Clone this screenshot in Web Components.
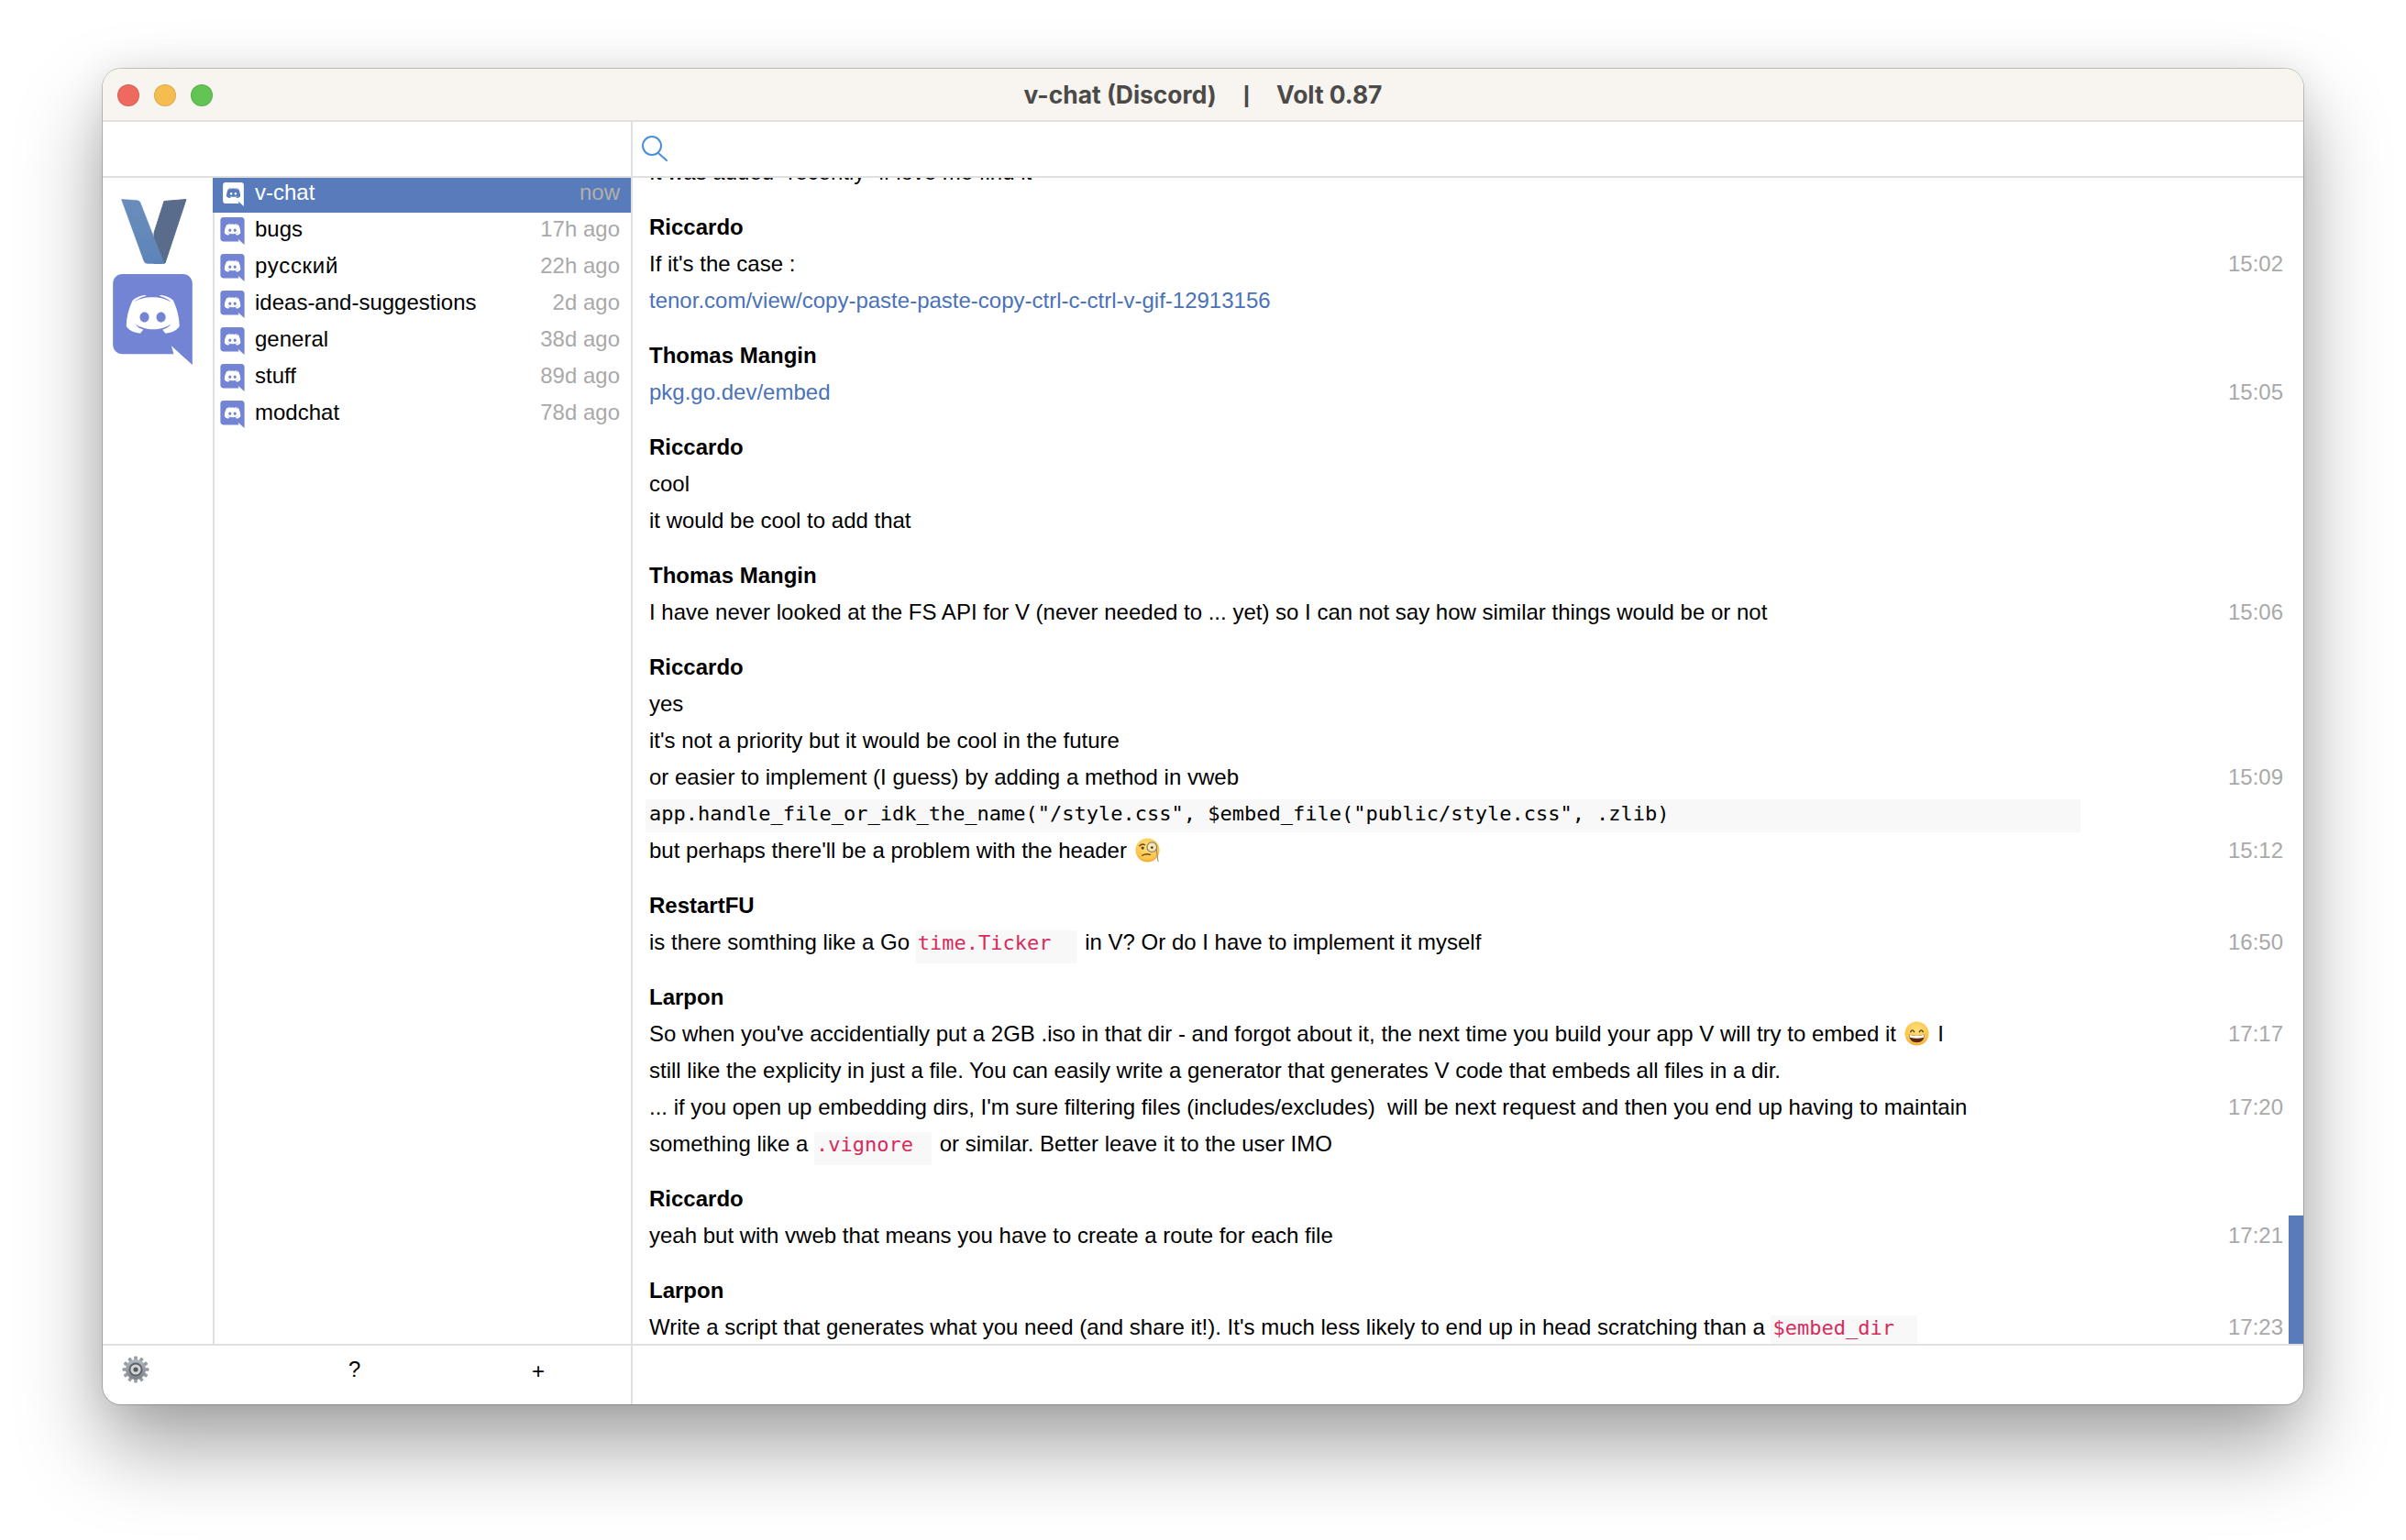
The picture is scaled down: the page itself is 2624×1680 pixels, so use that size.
<!DOCTYPE html>
<html>
<head>
<meta charset="utf-8">
<title>v-chat (Discord) | Volt 0.87</title>
<style>
  html, body { margin: 0; background: #fff; }
  body { padding: 75px 112px 0; height: 1680px; box-sizing: border-box; overflow: hidden; font-family: "Liberation Sans", Arial, sans-serif; }
</style>
</head>
<body>
<mac-window>
  <server-rail slot="rail"></server-rail>
  <channel-row slot="channels" name="v-chat" time="now" selected></channel-row>
  <channel-row slot="channels" name="bugs" time="17h ago"></channel-row>
  <channel-row slot="channels" name="русский" time="22h ago" style="--name-spacing:.7px"></channel-row>
  <channel-row slot="channels" name="ideas-and-suggestions" time="2d ago"></channel-row>
  <channel-row slot="channels" name="general" time="38d ago"></channel-row>
  <channel-row slot="channels" name="stuff" time="89d ago"></channel-row>
  <channel-row slot="channels" name="modchat" time="78d ago"></channel-row>
  <side-foot slot="sidefoot"></side-foot>
  <search-bar slot="search"></search-bar>

  <message-group slot="messages">
    <chat-line>It was added "recently" if love me find it</chat-line>
  </message-group>
  <message-group slot="messages" author="Riccardo">
    <chat-line time="15:02">If it's the case :</chat-line>
    <chat-line><a href="#" style="color:#4a72b8;text-decoration:none">tenor.com/view/copy-paste-paste-copy-ctrl-c-ctrl-v-gif-12913156</a></chat-line>
  </message-group>
  <message-group slot="messages" author="Thomas Mangin">
    <chat-line time="15:05"><a href="#" style="color:#4a72b8;text-decoration:none">pkg.go.dev/embed</a></chat-line>
  </message-group>
  <message-group slot="messages" author="Riccardo">
    <chat-line>cool</chat-line>
    <chat-line>it would be cool to add that</chat-line>
  </message-group>
  <message-group slot="messages" author="Thomas Mangin">
    <chat-line time="15:06">I have never looked at the FS API for V (never needed to ... yet) so I can not say how similar things would be or not</chat-line>
  </message-group>
  <message-group slot="messages" author="Riccardo">
    <chat-line>yes</chat-line>
    <chat-line>it's not a priority but it would be cool in the future</chat-line>
    <chat-line time="15:09">or easier to implement (I guess) by adding a method in vweb</chat-line>
    <code-block>app.handle_file_or_idk_the_name("/style.css", $embed_file("public/style.css", .zlib)</code-block>
    <chat-line time="15:12">but perhaps there'll be a problem with the header <chat-emoji kind="monocle"></chat-emoji></chat-line>
  </message-group>
  <message-group slot="messages" author="RestartFU">
    <chat-line time="16:50">is there somthing like a Go <inline-code style="padding-right:28px">time.Ticker</inline-code> in V? Or do I have to implement it myself</chat-line>
  </message-group>
  <message-group slot="messages" author="Larpon">
    <chat-line time="17:17">So when you've accidentially put a 2GB .iso in that dir - and forgot about it, the next time you build your app V will try to embed it <chat-emoji kind="grin"></chat-emoji> I</chat-line>
    <chat-line>still like the explicity in just a file. You can easily write a generator that generates V code that embeds all files in a dir.</chat-line>
    <chat-line time="17:20">... if you open up embedding dirs, I'm sure filtering files (includes/excludes)&nbsp; will be next request and then you end up having to maintain</chat-line>
    <chat-line>something like a <inline-code style="padding-right:20px">.vignore</inline-code> or similar. Better leave it to the user IMO</chat-line>
  </message-group>
  <message-group slot="messages" author="Riccardo">
    <chat-line time="17:21">yeah but with vweb that means you have to create a route for each file</chat-line>
  </message-group>
  <message-group slot="messages" author="Larpon">
    <chat-line time="17:23">Write a script that generates what you need (and share it!). It's much less likely to end up in head scratching than a <inline-code style="padding-right:25px">$embed_dir</inline-code></chat-line>
  </message-group>
</mac-window>

<script>
// Discord logo, bubble and face as one path; the face is a hole so the row colour shows through.
const DISCORD = `<svg viewBox="35 20 175 200" aria-hidden="true">
  <path d="M104.4 103.9c-5.7 0-10.2 5-10.2 11.1s4.6 11.1 10.2 11.1c5.7 0 10.2-5 10.2-11.1.1-6.1-4.5-11.1-10.2-11.1zM140.9 103.9c-5.7 0-10.2 5-10.2 11.1s4.6 11.1 10.2 11.1c5.7 0 10.2-5 10.2-11.1s-4.5-11.1-10.2-11.1z"/>
  <path d="M189.5 20h-134C44.2 20 35 29.2 35 40.6v135.2c0 11.4 9.2 20.6 20.5 20.6h113.4l-5.3-18.5 12.8 11.9 12.1 11.2 21.5 19V40.6c0-11.4-9.2-20.6-20.5-20.6zm-38.6 130.6s-3.6-4.3-6.6-8.1c13.1-3.7 18.1-11.9 18.1-11.9-4.1 2.7-8 4.6-11.5 5.9-5 2.1-9.8 3.5-14.5 4.3-9.6 1.8-18.4 1.3-25.9-.1-5.7-1.1-10.6-2.7-14.7-4.3-2.3-.9-4.8-2-7.3-3.4-.3-.2-.6-.3-.9-.5-.2-.1-.3-.2-.4-.3-1.8-1-2.8-1.7-2.8-1.7s4.8 8 17.5 11.8c-3 3.8-6.7 8.3-6.7 8.3-22.1-.7-30.5-15.2-30.5-15.2 0-32.2 14.4-58.3 14.4-58.3 14.4-10.8 28.1-10.5 28.1-10.5l1 1.2c-18 5.2-26.3 13.1-26.3 13.1s2.2-1.2 5.9-2.9c10.7-4.7 19.2-6 22.7-6.3.6-.1 1.1-.2 1.7-.2 6.1-.8 13-1 20.2-.2 9.5 1.1 19.7 3.9 30.1 9.6 0 0-7.9-7.5-24.9-12.7l1.4-1.6s13.7-.3 28.1 10.5c0 0 14.4 26.1 14.4 58.3 0 0-8.5 14.5-30.6 15.2z"/>
</svg>`;

const LINE = '#e0e0e0';

// --- leaf elements first, so they are ready when the lines around them lay out ---
class ChatEmoji extends HTMLElement {
  constructor() {
    super();
    this.attachShadow({ mode: 'open' });
  }
  connectedCallback() {
    const face = this.getAttribute('kind') === 'grin' ? `
      <path d="M7 12 Q9 8.5 11 12 M17 12 Q19 8.5 21 12" fill="none" stroke="#5a3a10" stroke-width="1.5" stroke-linecap="round"/>
      <path d="M5 15 Q14 18 23 15 Q22.5 24 14 24 Q5.5 24 5 15 Z" fill="#5a2a10"/>
      <path d="M5.5 15.2 Q14 18 22.5 15.2 L22 18.5 Q14 20.5 6 18.5 Z" fill="#fff"/>` : `
      <path d="M5 9 Q8 6 11 8" fill="none" stroke="#6b4410" stroke-width="1.4" stroke-linecap="round"/>
      <circle cx="8.5" cy="11.5" r="1.6" fill="#5a3a10"/>
      <path d="M8 20 Q12 17.5 17 19" fill="none" stroke="#6b4410" stroke-width="1.4" stroke-linecap="round"/>
      <circle cx="19" cy="10.5" r="5.5" fill="#f4efdc" fill-opacity=".7" stroke="#8b8270" stroke-width="1.3"/>
      <circle cx="19" cy="11" r="1.5" fill="#5a3a10"/>
      <path d="M24 13 Q25 20 26 27" fill="none" stroke="#8b8270" stroke-width="1"/>`;
    this.shadowRoot.innerHTML = `
      <style>
        :host { display: inline-block; width: 27px; height: 27px; margin: 0 3px -5px 2px; }
        svg { display: block; width: 100%; height: 100%; overflow: visible; }
      </style>
      <svg viewBox="0 0 28 28" aria-hidden="true">
        <defs>
          <radialGradient id="f" cx=".5" cy=".35" r=".75"><stop offset="0" stop-color="#ffe27a"/><stop offset=".7" stop-color="#fbc34a"/><stop offset="1" stop-color="#e8912a"/></radialGradient>
        </defs>
        <circle cx="14" cy="14" r="13.5" fill="url(#f)"/>
        ${face}
      </svg>`;
  }
}

class InlineCode extends HTMLElement {
  constructor() {
    super();
    this.attachShadow({ mode: 'open' }).innerHTML = `
      <style>
        :host { display: inline-block; height: 36px; margin-right: 2px; padding-left: 2px; background: #f8f8f8; color: #d72b5c; font: 22px/28px "DejaVu Sans Mono", "Liberation Mono", monospace; }
      </style>
      <slot></slot>`;
  }
}

class CodeBlock extends HTMLElement {
  constructor() {
    super();
    this.attachShadow({ mode: 'open' }).innerHTML = `
      <style>
        :host { display: block; height: 40px; box-sizing: border-box; padding: 4px 0 0 13.5px; }
        div { width: 1565px; height: 36px; box-sizing: border-box; padding-left: 4.5px; background: #f8f8f8; color: #000; font: 22px/32px "DejaVu Sans Mono", "Liberation Mono", monospace; white-space: pre; }
      </style>
      <div><slot></slot></div>`;
  }
}

class ChatLine extends HTMLElement {
  constructor() {
    super();
    this.attachShadow({ mode: 'open' });
  }
  connectedCallback() {
    const time = this.getAttribute('time');
    this.shadowRoot.innerHTML = `
      <style>
        :host { display: flex; height: 40px; padding: 0 22px 0 18px; font-size: 24px; line-height: 40px; color: #000; white-space: nowrap; }
        .text { flex: 1; }
        .time { color: #a9a9a9; }
      </style>
      <div class="text"><slot></slot></div>
      ${time ? `<div class="time">${time}</div>` : ''}`;
  }
}

class MessageGroup extends HTMLElement {
  constructor() {
    super();
    this.attachShadow({ mode: 'open' });
  }
  connectedCallback() {
    const author = this.getAttribute('author');
    this.shadowRoot.innerHTML = `
      <style>
        :host { display: block; margin-bottom: 20px; }
        .who { padding-left: 18px; font: bold 24px/40px "Liberation Sans", Arial, sans-serif; color: #000; }
      </style>
      ${author ? `<div class="who">${author}</div>` : ''}
      <slot></slot>`;
  }
}

class SearchBar extends HTMLElement {
  constructor() {
    super();
    this.attachShadow({ mode: 'open' }).innerHTML = `
      <style>
        :host { display: flex; align-items: center; height: 100%; padding-left: 9px; }
        svg { width: 30px; height: 28px; margin-top: -2px; fill: none; stroke: #4a90d9; stroke-width: 2; stroke-linecap: round; }
      </style>
      <svg viewBox="0 0 30 28" aria-hidden="true"><circle cx="12" cy="11" r="10"/><path d="M19 19 L28 27"/></svg>`;
  }
}

class SideFoot extends HTMLElement {
  constructor() {
    super();
    const teeth = Array.from({ length: 12 }, (_, i) =>
      `<rect x="13.2" y="0.5" width="3.6" height="6" rx=".8" fill="#969ca3" transform="rotate(${i * 30} 15 15)"/>`).join('');
    this.attachShadow({ mode: 'open' }).innerHTML = `
      <style>
        :host { display: block; height: 100%; font-size: 24px; color: #000; position: relative; }
        svg { display: block; width: 30px; height: 30px; padding: 11px 0 0 21px; }
        .q { position: absolute; left: 268px; top: 12px; }
        .p { position: absolute; left: 468px; top: 14px; }
      </style>
      <svg viewBox="0 0 30 30" aria-hidden="true">
        <defs>
          <linearGradient id="g" x1="0" y1="0" x2="0" y2="1"><stop offset="0" stop-color="#b4b9be"/><stop offset="1" stop-color="#7a8087"/></linearGradient>
        </defs>
        ${teeth}
        <circle cx="15" cy="15" r="11" fill="url(#g)"/>
        <circle cx="15" cy="15" r="7.5" fill="#5d6268"/>
        <circle cx="15" cy="15" r="5.6" fill="#d3d6d9"/>
        <circle cx="15" cy="15" r="2.6" fill="#55595e"/>
      </svg>
      <span class="q">?</span>
      <span class="p">+</span>`;
  }
}

class ChannelRow extends HTMLElement {
  constructor() {
    super();
    this.attachShadow({ mode: 'open' });
  }
  connectedCallback() {
    this.shadowRoot.innerHTML = `
      <style>
        :host { display: block; height: 40px; font-size: 24px; color: #000; }
        :host([selected]) { margin-left: -2px; }
        .row { display: flex; align-items: center; height: 38px; padding: 0 12px 0 6px; box-sizing: border-box; }
        :host([selected]) .row { background: #587cbb; color: #fff; padding-left: 11px; }
        svg { width: 27px; height: 30px; fill: #7484d4; flex: none; margin-top: -2px; }
        :host([selected]) svg { width: 23px; height: 26px; fill: #fff; margin-top: -3px; }
        .name { flex: 1; margin: -6px 0 0 11px; letter-spacing: var(--name-spacing, 0); }
        :host([selected]) .name { margin-left: 12px; }
        .time { color: #a9a9a9; margin-top: -6px; }
        :host([selected]) .time { color: #b3afab; }
      </style>
      <div class="row">
        ${DISCORD}
        <span class="name">${this.getAttribute('name')}</span>
        <span class="time">${this.getAttribute('time')}</span>
      </div>`;
  }
}

class ServerRail extends HTMLElement {
  constructor() {
    super();
    this.attachShadow({ mode: 'open' }).innerHTML = `
      <style>
        :host { display: flex; flex-direction: column; align-items: flex-start; padding: 23px 0 0 11px; }
        .v { width: 72px; height: 71px; margin-left: 9px; display: block; }
        .d { width: 87px; height: 99px; margin-top: 11px; display: block; fill: #7484d4; }
      </style>
      <svg class="v" viewBox="0 0 72 71" aria-hidden="true">
        <defs>
          <linearGradient id="vl" x1="0" y1="0" x2="0" y2="1"><stop offset="0" stop-color="#6a8dbb"/><stop offset="1" stop-color="#5d84b9"/></linearGradient>
        </defs>
        <path d="M47 2.5 L71 0.5 L48 70 L36 71 L36 37 Z" fill="#5a6c8c" stroke="#5a6c8c" stroke-linejoin="round"/>
        <path d="M0.5 0.5 L17 1.5 Q20 1.5 21 4 L47 70.5 L29 70.5 Q26 70.5 25 68 Z" fill="url(#vl)" stroke="#6388ba" stroke-width=".5" stroke-linejoin="round"/>
      </svg>
      ${DISCORD.replace('<svg ', '<svg class="d" ')}`;
  }
}

class MacWindow extends HTMLElement {
  constructor() {
    super();
    this.attachShadow({ mode: 'open' }).innerHTML = `
      <style>
        :host {
          display: grid;
          grid-template-columns: 120px 458px 1fr;
          grid-template-rows: 58px 61px 1fr 66px;
          width: 2400px;
          height: 1457px;
          border-radius: 20px;
          background: #fff;
          overflow: hidden;
          box-shadow: 0 0 0 1px rgba(0,0,0,.2), 0 46px 90px rgba(0,0,0,.36), 0 0 40px rgba(0,0,0,.08);
        }
        .title {
          grid-column: 1 / -1;
          display: flex;
          align-items: center;
          justify-content: center;
          gap: 29px;
          position: relative;
          background: #f8f4f0;
          border-bottom: 2px solid #e3e0dd;
          color: #4b4a48;
          font: 700 26.4px Inter, "Liberation Sans", sans-serif;
        }
        .pipe { font-family: "Liberation Sans", sans-serif; }
        .lights { position: absolute; left: 16px; top: 17px; display: flex; gap: 16px; }
        .lights i { width: 24px; height: 24px; border-radius: 50%; box-sizing: border-box; border: 1px solid rgba(0,0,0,.1); }
        .top-left, .top-right, .channels, .foot-left, .foot-right { box-sizing: border-box; }
        .top-left { grid-column: 1 / 3; border-right: 2px solid ${LINE}; border-bottom: 2px solid ${LINE}; }
        .top-right { border-bottom: 2px solid ${LINE}; }
        .channels { border-left: 2px solid ${LINE}; border-right: 2px solid ${LINE}; }
        .messages { overflow: hidden; position: relative; }
        .foot-left { grid-column: 1 / 3; border-top: 2px solid ${LINE}; border-right: 2px solid ${LINE}; }
        .foot-right { border-top: 2px solid ${LINE}; }
        .scroll { position: absolute; right: 0; bottom: 0; width: 16px; height: 140px; background: #587cbb; }
        .list { margin-top: -26px; }
      </style>
      <div class="title">
        <div class="lights"><i style="background:#ee6a5f"></i><i style="background:#f5bd4f"></i><i style="background:#61c454"></i></div>
        <span>v-chat (Discord)</span><span class="pipe">|</span><span>Volt 0.87</span>
      </div>
      <div class="top-left"></div>
      <div class="top-right"><slot name="search"></slot></div>
      <div class="rail"><slot name="rail"></slot></div>
      <div class="channels"><slot name="channels"></slot></div>
      <div class="messages">
        <div class="list"><slot name="messages"></slot></div>
        <div class="scroll"></div>
      </div>
      <div class="foot-left"><slot name="sidefoot"></slot></div>
      <div class="foot-right"></div>`;
  }
}

customElements.define('chat-emoji', ChatEmoji);
customElements.define('inline-code', InlineCode);
customElements.define('code-block', CodeBlock);
customElements.define('chat-line', ChatLine);
customElements.define('message-group', MessageGroup);
customElements.define('search-bar', SearchBar);
customElements.define('side-foot', SideFoot);
customElements.define('channel-row', ChannelRow);
customElements.define('server-rail', ServerRail);
customElements.define('mac-window', MacWindow);
</script>
</body>
</html>
